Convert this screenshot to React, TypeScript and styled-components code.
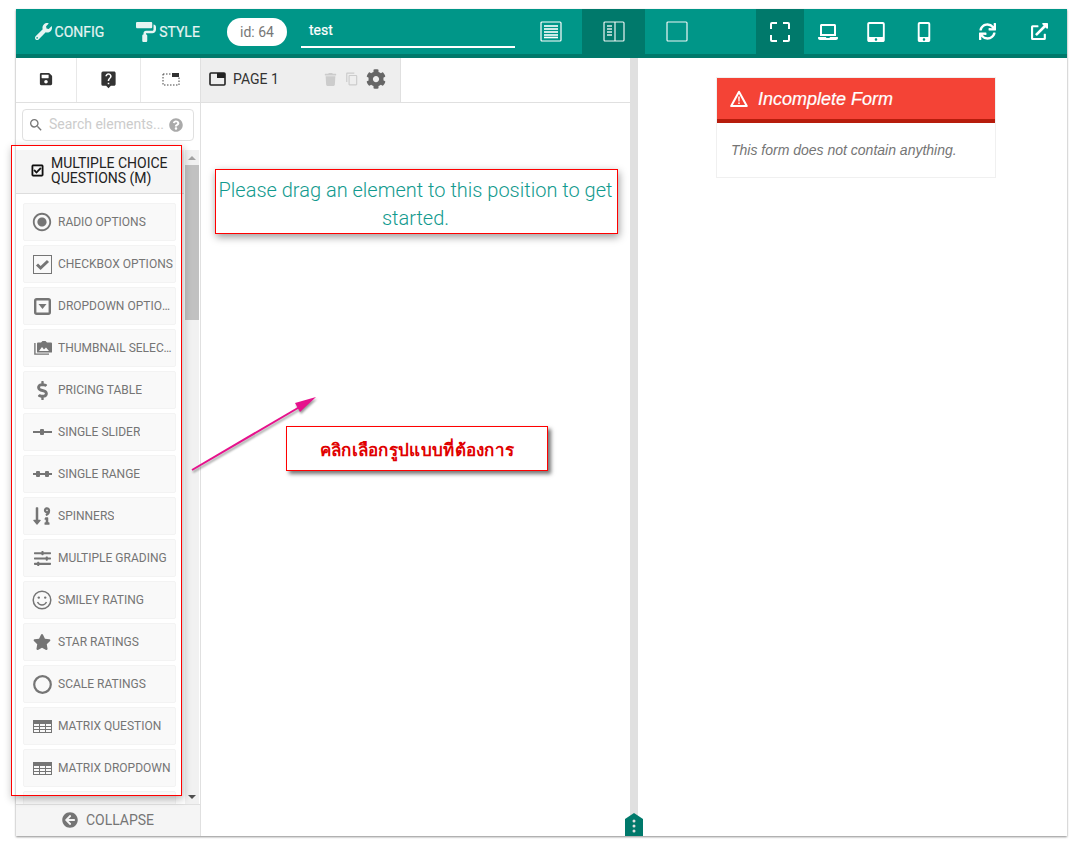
import styled, { createGlobalStyle } from "styled-components";
import { ReactNode } from "react";
import {
  FaWrench,
  FaPaintRoller,
  FaSave,
  FaTrash,
  FaCog,
  FaRegCheckSquare,
  FaDollarSign,
  FaSortNumericDownAlt,
  FaSlidersH,
  FaStar,
  FaArrowCircleLeft,
  FaLaptop,
  FaTabletAlt,
  FaMobileAlt,
  FaSync,
  FaExternalLinkAlt,
  FaQuestionCircle,
  FaCaretUp,
} from "react-icons/fa";
import {
  MdRadioButtonChecked,
  MdLiveHelp,
  MdSearch,
  MdContentCopy,
} from "react-icons/md";

const GlobalStyle = createGlobalStyle`
  html, body {
    margin: 0;
    padding: 0;
    background: #fff;
    font-family: Roboto, "Liberation Sans", sans-serif;
  }
  * { box-sizing: border-box; }
`;

const Page = styled.div`
  width: 1079px;
  height: 851px;
  padding: 9px 12px 15px 16px;
  position: relative;
  overflow: hidden;
`;

const Frame = styled.div`
  width: 1051px;
  height: 827px;
  display: flex;
  flex-direction: column;
  box-shadow: 0 1px 2px rgba(0, 0, 0, 0.45);
  background: #fff;
`;

const TopBar = styled.div`
  height: 49px;
  flex: none;
  display: flex;
  align-items: stretch;
  background: #009688;
  border-bottom: 4px solid #00796b;
  color: #fff;
`;

const NavTab = styled.div<{ $w: number }>`
  width: ${(p) => p.$w}px;
  flex: none;
  display: flex;
  align-items: center;
  justify-content: center;
  gap: 3px;
  font-size: 14px;
  color: #e6f4f2;
  -webkit-text-stroke: 0.2px #e6f4f2;
`;

const IdPill = styled.div`
  width: 60px;
  height: 28px;
  flex: none;
  margin: 9px 14px 0 14px;
  border-radius: 14px;
  background: #fff;
  color: #777;
  font-size: 14px;
  display: flex;
  align-items: center;
  justify-content: center;
`;

const TitleInput = styled.div`
  width: 214px;
  height: 30px;
  flex: none;
  margin-top: 9px;
  padding: 4px 8px;
  border-bottom: 2px solid #fff;
  font-size: 14px;
  color: #fff;
  -webkit-text-stroke: 0.2px #fff;
`;

const IconButton = styled.div<{ $w: number; $active?: boolean }>`
  width: ${(p) => p.$w}px;
  flex: none;
  display: flex;
  align-items: center;
  justify-content: center;
  background: ${(p) => (p.$active ? "#00796b" : "transparent")};
  color: #fff;
`;

const Gap = styled.div<{ $w: number }>`
  width: ${(p) => p.$w}px;
  flex: none;
`;

const Body = styled.div`
  flex: 1;
  min-height: 0;
  display: flex;
`;

const Builder = styled.div`
  width: 614px;
  flex: none;
  display: flex;
`;

const Sidebar = styled.div`
  width: 185px;
  flex: none;
  display: flex;
  flex-direction: column;
  border-right: 1px solid #e0e0e0;
`;

const ToolRow = styled.div`
  height: 45px;
  flex: none;
  display: flex;
  border-bottom: 1px solid #e0e0e0;
`;

const ToolCell = styled.div<{ $w: number }>`
  width: ${(p) => p.$w}px;
  padding-bottom: 2px;
  display: flex;
  align-items: center;
  justify-content: center;
  color: #333;
  & + & {
    border-left: 1px solid #e8e8e8;
  }
`;

const SearchBox = styled.div`
  height: 32px;
  margin: 6px 6px 9px 6px;
  border: 1px solid #e0e0e0;
  border-radius: 4px;
  display: flex;
  align-items: center;
  padding: 0 10px 2px 5px;
  color: #ccc;
  font-size: 14px;
  gap: 5px;
  white-space: nowrap;
  svg:first-child {
    color: #777;
    margin-top: 2px;
  }
  svg:last-child {
    color: #aaa;
    margin-left: auto;
    margin-top: 2px;
  }
`;

const Shelf = styled.div`
  flex: 1;
  min-height: 0;
  display: flex;
`;

const ShelfList = styled.div`
  width: 168px;
  flex: none;
  overflow: hidden;
`;

const GroupHeader = styled.div`
  height: 44px;
  display: flex;
  align-items: center;
  gap: 7px;
  padding: 0 0 2px 15px;
  background: #f5f5f5;
  border-bottom: 1px solid #ddd;
  color: #222;
  font-size: 14px;
  line-height: 15px;
  svg {
    flex: none;
    stroke-width: 22px;
    color: #111;
  }
`;

const ItemList = styled.div`
  display: flex;
  flex-direction: column;
  gap: 4px;
  padding: 9px 0 0 7px;
`;

const Item = styled.div`
  width: 153px;
  height: 38px;
  flex: none;
  display: flex;
  align-items: center;
  padding-left: 8px;
  background: #f9f9f9;
  border: 1px solid #f3f3f3;
  border-radius: 2px;
  color: #757575;
  font-size: 12px;
  white-space: nowrap;
  svg {
    flex: none;
  }
`;

const ItemIcon = styled.span`
  width: 20px;
  height: 20px;
  margin-right: 6px;
  flex: none;
  display: flex;
  align-items: center;
  justify-content: center;
  color: #757575;
`;

const ItemLabel = styled.span`
  overflow: hidden;
  text-overflow: ellipsis;
  max-width: 117px;
`;

const ScrollTrack = styled.div`
  width: 14px;
  margin-left: 1px;
  background: #f1f1f1;
  display: flex;
  flex-direction: column;
  align-items: center;
`;

const ScrollArrow = styled.div<{ $down?: boolean }>`
  width: 0;
  height: 0;
  margin: 6px 0 5px;
  border-left: 4px solid transparent;
  border-right: 4px solid transparent;
  ${(p) =>
    p.$down
      ? "border-top: 4px solid #505050; margin-top: auto;"
      : "border-bottom: 4px solid #a3a3a3;"}
`;

const ScrollThumb = styled.div`
  width: 100%;
  height: 155px;
  background: #c1c1c1;
`;

const CollapseBar = styled.div`
  height: 32px;
  flex: none;
  display: flex;
  align-items: center;
  justify-content: center;
  gap: 8px;
  padding-bottom: 2px;
  background: #f5f5f5;
  border-top: 1px solid #e0e0e0;
  color: #757575;
  font-size: 14px;
`;

const Canvas = styled.div`
  flex: 1;
  min-width: 0;
  display: flex;
  flex-direction: column;
`;

const PageTabs = styled.div`
  height: 45px;
  flex: none;
  display: flex;
  border-bottom: 1px solid #e0e0e0;
`;

const PageTab = styled.div`
  width: 200px;
  background: #eee;
  border-right: 1px solid #e0e0e0;
  display: flex;
  align-items: center;
  padding: 0 0 2px 8px;
  color: #333;
  font-size: 14px;
`;

const PageName = styled.span`
  margin-left: 7px;
  width: 86px;
`;

const TabAction = styled.span<{ $dark?: boolean }>`
  width: ${(p) => (p.$dark ? 26 : 22)}px;
  display: flex;
  align-items: center;
  justify-content: center;
  color: ${(p) => (p.$dark ? "#666" : "#ccc")};
`;

const DropHint = styled.div`
  width: 403px;
  height: 65px;
  margin: 66px 0 0 14px;
  padding: 4px 2px 0 0;
  border: 1px solid #f00;
  box-shadow: 1px 3px 8px rgba(0, 0, 0, 0.4);
  display: flex;
  align-items: center;
  justify-content: center;
  text-align: center;
  color: #129a8e;
  font-size: 20px;
  font-weight: 300;
  line-height: 28px;
`;

const Splitter = styled.div`
  width: 8px;
  flex: none;
  background: #e0e0e0;
`;

const Preview = styled.div`
  flex: 1;
  min-width: 0;
  padding: 19px 0 0 78px;
`;

const AlertCard = styled.div`
  width: 280px;
  height: 101px;
  border: 1px solid #f0f0f0;
`;

const AlertHead = styled.div`
  height: 45px;
  background: #f44336;
  border-bottom: 4px solid #b71c0c;
  display: flex;
  align-items: center;
  gap: 10px;
  padding: 1px 0 0 13px;
  color: #fff;
  font: italic 18px "Liberation Sans", Arial, sans-serif;
  -webkit-text-stroke: 0.2px #fff;
`;

const AlertBody = styled.div`
  padding: 19px 14px;
  color: #757575;
  font: italic 14px "Liberation Sans", Arial, sans-serif;
`;

const SplitHandle = styled.svg`
  position: absolute;
  left: 625px;
  top: 813px;
`;

const Highlight = styled.div`
  position: absolute;
  left: 11px;
  top: 145px;
  width: 171px;
  height: 651px;
  border: 1px solid #f00;
  box-shadow: 1px 3px 8px rgba(0, 0, 0, 0.3);
  pointer-events: none;
`;

const Arrow = styled.svg`
  position: absolute;
  left: 185px;
  top: 390px;
  filter: drop-shadow(1px 2px 1px rgba(0, 0, 0, 0.4));
`;

const Callout = styled.div`
  position: absolute;
  left: 286px;
  top: 426px;
  width: 262px;
  height: 45px;
  padding-top: 2px;
  border: 1px solid #f00;
  background: #fff;
  box-shadow: 3px 3px 4px rgba(0, 0, 0, 0.55);
  display: flex;
  align-items: center;
  justify-content: center;
  color: #e00000;
  font: bold 17px "Noto Sans", "DejaVu Sans", sans-serif;
  letter-spacing: 0.3px;
`;

function PanelIcon({ kind }: { kind: "rows" | "split" | "empty" }) {
  return (
    <svg width="22" height="21" viewBox="0 0 22 21" fill="none" stroke="#fff" strokeOpacity={kind === "rows" ? 1 : 0.92}>
      <rect x="1" y="1" width="20" height="19" rx="1" strokeWidth="1.2" />
      {kind === "rows" &&
        [5, 8, 11, 14, 16.5].map((y) => <path key={y} d={`M4 ${y}h14`} strokeWidth="1.6" />)}
      {kind === "split" && (
        <>
          <path d="M12 1v19" strokeWidth="1.2" />
          {[5, 8, 11, 14].map((y) => (
            <path key={y} d={`M4 ${y}h5`} strokeWidth="1.4" />
          ))}
        </>
      )}
    </svg>
  );
}

function FullscreenIcon() {
  return (
    <svg width="20" height="20" viewBox="0 0 20 20" fill="none" stroke="#fff" strokeWidth="2">
      <path d="M7 1H2a1 1 0 0 0-1 1v5M13 1h5a1 1 0 0 1 1 1v5M7 19H2a1 1 0 0 1-1-1v-5M13 19h5a1 1 0 0 0 1-1v-5" />
    </svg>
  );
}

function PageIcon() {
  return (
    <svg width="17" height="14" viewBox="0 0 17 14">
      <rect x="1" y="1" width="15" height="12" rx="1" fill="none" stroke="#222" strokeWidth="1.6" />
      <rect x="8" y="1" width="8" height="5" fill="#222" />
    </svg>
  );
}

function SectionIcon() {
  return (
    <svg width="18" height="14" viewBox="0 0 18 14" fill="none" stroke="#444">
      <path d="M1 2v11h16V5M1 2h9" strokeDasharray="1.5 1.5" />
      <rect x="10" y="1" width="7" height="4" fill="#333" stroke="none" />
    </svg>
  );
}

function SliderIcon({ range }: { range?: boolean }) {
  return (
    <svg width="19" height="8" viewBox="0 0 19 8" fill="#757575">
      <rect x="0" y="3" width="19" height="2" />
      {range ? (
        <>
          <rect x="3" y="1" width="4" height="6" rx="1" />
          <rect x="12" y="1" width="4" height="6" rx="1" />
        </>
      ) : (
        <rect x="7" y="1" width="4" height="6" rx="1" />
      )}
    </svg>
  );
}

function TableIcon() {
  return (
    <svg width="19" height="13" viewBox="0 0 19 13" fill="none" stroke="#757575">
      <rect x="0.5" y="0.5" width="18" height="12" />
      <rect x="0.5" y="0.5" width="18" height="3" fill="#757575" />
      <path d="M0 6.5h19M0 9.5h19M6.5 3v10M12.5 3v10" />
    </svg>
  );
}

function CheckOutlineIcon() {
  return (
    <svg width="19" height="19" viewBox="0 0 19 19">
      <rect x="0.5" y="0.5" width="18" height="18" fill="none" stroke="#757575" />
      <path d="M4 9.5l3.6 3.5L15 6" fill="none" stroke="#757575" strokeWidth="3" />
    </svg>
  );
}

function DropdownIcon() {
  return (
    <svg width="17" height="17" viewBox="0 0 17 17">
      <rect x="1.2" y="1.2" width="14.6" height="14.6" rx="1.5" fill="none" stroke="#757575" strokeWidth="2.4" />
      <path d="M4.5 6h8l-4 5z" fill="#757575" />
    </svg>
  );
}

function PhotosIcon() {
  return (
    <svg width="19" height="16" viewBox="0 0 19 16" fill="#757575">
      <path d="M1.2 3v11.8H16v-1.4H2.6V3z" />
      <path d="M4 3.5a1 1 0 0 1 1-1h3l1.5-1.5h3L14 2.5h4a1 1 0 0 1 1 1V12a.5.5 0 0 1-.5.5H4.5A.5.5 0 0 1 4 12z" />
      <path d="M6 11l3-4 2 2.4 2-2 3 3.6z" fill="#f9f9f9" />
    </svg>
  );
}

function SmileyIcon() {
  return (
    <svg width="20" height="20" viewBox="0 0 20 20" fill="none" stroke="#757575">
      <circle cx="10" cy="10" r="8.8" strokeWidth="1.5" />
      <circle cx="6.8" cy="7.6" r="1.2" fill="#757575" stroke="none" />
      <circle cx="13.2" cy="7.6" r="1.2" fill="#757575" stroke="none" />
      <path d="M5.5 12c1 2 2.6 3 4.5 3s3.5-1 4.5-3" strokeWidth="1.4" />
    </svg>
  );
}

function RingIcon() {
  return (
    <svg width="19" height="19" viewBox="0 0 19 19">
      <circle cx="9.5" cy="9.5" r="8.3" fill="none" stroke="#757575" strokeWidth="2.2" />
    </svg>
  );
}

function WarningIcon() {
  return (
    <svg width="18" height="18" viewBox="0 0 18 18">
      <path d="M9 1.8L1.2 16h15.6z" fill="none" stroke="#fff" strokeWidth="2" strokeLinejoin="round" />
      <path d="M8.2 6.5h1.6l-.2 5H8.4zM8.2 12.5h1.6v1.6H8.2z" fill="#fff" />
    </svg>
  );
}

const items: { label: string; icon: ReactNode }[] = [
  { label: "RADIO OPTIONS", icon: <MdRadioButtonChecked size={22} /> },
  { label: "CHECKBOX OPTIONS", icon: <CheckOutlineIcon /> },
  { label: "DROPDOWN OPTIONS", icon: <DropdownIcon /> },
  { label: "THUMBNAIL SELECTOR", icon: <PhotosIcon /> },
  { label: "PRICING TABLE", icon: <FaDollarSign size={19} /> },
  { label: "SINGLE SLIDER", icon: <SliderIcon /> },
  { label: "SINGLE RANGE", icon: <SliderIcon range /> },
  { label: "SPINNERS", icon: <FaSortNumericDownAlt size={20} /> },
  { label: "MULTIPLE GRADING", icon: <FaSlidersH size={17} /> },
  { label: "SMILEY RATING", icon: <SmileyIcon /> },
  { label: "STAR RATINGS", icon: <FaStar size={18} /> },
  { label: "SCALE RATINGS", icon: <RingIcon /> },
  { label: "MATRIX QUESTION", icon: <TableIcon /> },
  { label: "MATRIX DROPDOWN", icon: <TableIcon /> },
  { label: "", icon: <FaCaretUp size={20} /> },
];

export default function App() {
  return (
    <Page>
      <GlobalStyle />
      <Frame>
        <TopBar>
          <NavTab $w={107}>
            <FaWrench size={17} /> CONFIG
          </NavTab>
          <NavTab $w={90}>
            <FaPaintRoller size={20} /> STYLE
          </NavTab>
          <IdPill>id: 64</IdPill>
          <TitleInput>test</TitleInput>
          <Gap $w={5} />
          <IconButton $w={62}>
            <PanelIcon kind="rows" />
          </IconButton>
          <IconButton $w={63} $active>
            <PanelIcon kind="split" />
          </IconButton>
          <IconButton $w={63}>
            <PanelIcon kind="empty" />
          </IconButton>
          <Gap $w={48} />
          <IconButton $w={48} $active>
            <FullscreenIcon />
          </IconButton>
          <IconButton $w={48}>
            <FaLaptop size={20} />
          </IconButton>
          <IconButton $w={48}>
            <FaTabletAlt size={20} />
          </IconButton>
          <IconButton $w={48}>
            <FaMobileAlt size={20} />
          </IconButton>
          <Gap $w={15} />
          <IconButton $w={48}>
            <FaSync size={17} />
          </IconButton>
          <IconButton $w={56}>
            <FaExternalLinkAlt size={17} />
          </IconButton>
        </TopBar>
        <Body>
          <Builder>
            <Sidebar>
              <ToolRow>
                <ToolCell $w={60}>
                  <FaSave size={14} />
                </ToolCell>
                <ToolCell $w={64}>
                  <MdLiveHelp size={19} />
                </ToolCell>
                <ToolCell $w={60}>
                  <SectionIcon />
                </ToolCell>
              </ToolRow>
              <SearchBox>
                <MdSearch size={16} />
                Search elements...
                <FaQuestionCircle size={14} />
              </SearchBox>
              <Shelf>
                <ShelfList>
                  <GroupHeader>
                    <FaRegCheckSquare size={13} />
                    <span>
                      MULTIPLE CHOICE
                      <br />
                      QUESTIONS (M)
                    </span>
                  </GroupHeader>
                  <ItemList>
                    {items.map((item, i) => (
                      <Item key={i}>
                        <ItemIcon>{item.icon}</ItemIcon>
                        {item.label && <ItemLabel>{item.label}</ItemLabel>}
                      </Item>
                    ))}
                  </ItemList>
                </ShelfList>
                <ScrollTrack>
                  <ScrollArrow />
                  <ScrollThumb />
                  <ScrollArrow $down />
                </ScrollTrack>
              </Shelf>
              <CollapseBar>
                <FaArrowCircleLeft size={16} />
                COLLAPSE
              </CollapseBar>
            </Sidebar>
            <Canvas>
              <PageTabs>
                <PageTab>
                  <PageIcon />
                  <PageName>PAGE 1</PageName>
                  <TabAction>
                    <FaTrash size={13} />
                  </TabAction>
                  <TabAction>
                    <MdContentCopy size={14} />
                  </TabAction>
                  <TabAction $dark>
                    <FaCog size={20} />
                  </TabAction>
                </PageTab>
              </PageTabs>
              <DropHint>Please drag an element to this position to get started.</DropHint>
            </Canvas>
          </Builder>
          <Splitter />
          <Preview>
            <AlertCard>
              <AlertHead>
                <WarningIcon />
                Incomplete Form
              </AlertHead>
              <AlertBody>This form does not contain anything.</AlertBody>
            </AlertCard>
          </Preview>
        </Body>
      </Frame>
      <SplitHandle width="18" height="23" viewBox="0 0 18 23">
        <path d="M0 6L9 0l9 6v17H0z" fill="#00796b" />
        <circle cx="9" cy="8" r="1.5" fill="#e0e0e0" />
        <circle cx="9" cy="13" r="1.5" fill="#e0e0e0" />
        <circle cx="9" cy="18" r="1.5" fill="#e0e0e0" />
      </SplitHandle>
      <Highlight />
      <Arrow width="140" height="90" viewBox="0 0 140 90">
        <path d="M7 80L118 15" stroke="#e6128c" strokeWidth="2" />
        <path d="M131 7L110 13l5 9z" fill="#e6128c" />
      </Arrow>
      <Callout>คลิกเลือกรูปแบบที่ต้องการ</Callout>
    </Page>
  );
}
